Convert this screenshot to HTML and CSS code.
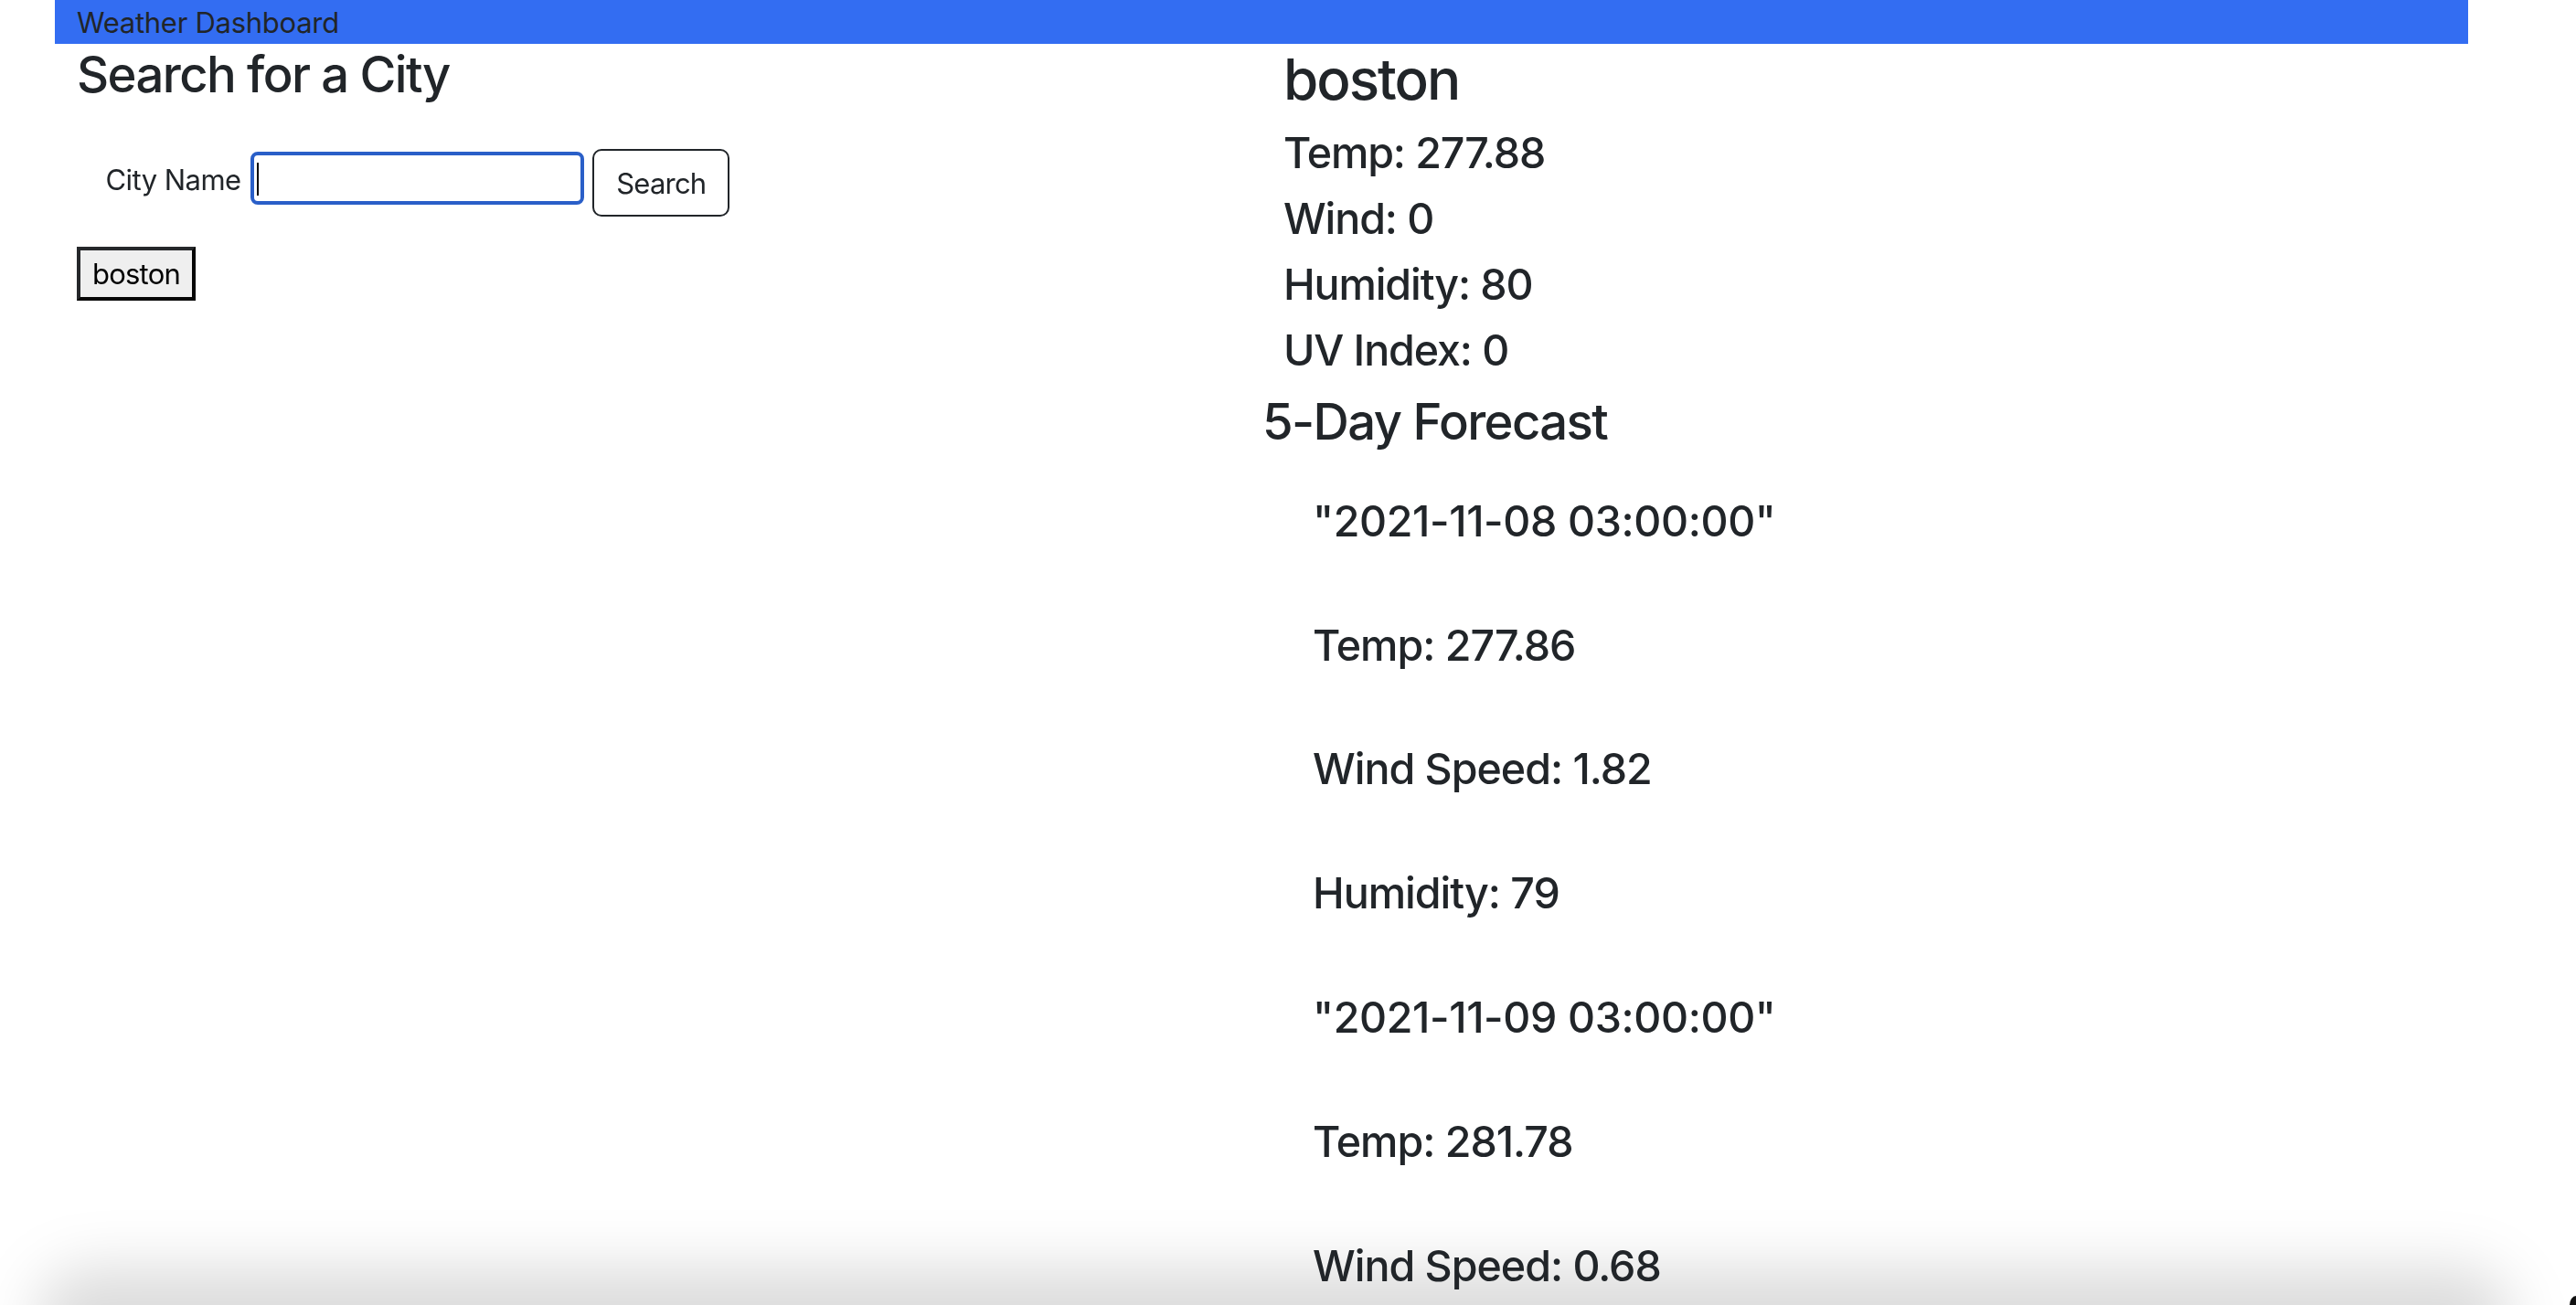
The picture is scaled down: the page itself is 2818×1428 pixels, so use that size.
FILE: index.html
```html
<!DOCTYPE html>
<html lang="en">
<head>
<meta charset="utf-8">
<title>Weather Dashboard</title>
<link rel="stylesheet" href="styles.css">
</head>
<body>
<div class="page">
  <header class="topbar">Weather Dashboard</header>
  <div class="row">
    <section class="search-col">
      <h3 class="title">Search for a City</h3>
      <form class="search-form">
        <label class="label" for="city">City Name</label>
        <span class="input-wrap">
          <input id="city" class="city-input" type="text">
          <span class="caret"></span>
        </span>
        <button type="button" class="btn-search">Search</button>
      </form>
      <div class="history">
        <button type="button" class="history-btn">boston</button>
      </div>
    </section>
    <section class="weather-col">
      <div class="current">
        <h2 class="city-name">boston</h2>
        <h4 class="stat">Temp: 277.88</h4>
        <h4 class="stat">Wind: 0</h4>
        <h4 class="stat">Humidity: 80</h4>
        <h4 class="stat">UV Index: 0</h4>
      </div>
      <h3 class="forecast-title">5-Day Forecast</h3>
      <div class="forecast">
        <p class="fc-line fc-date">"2021-11-08 03:00:00"</p>
        <p class="fc-line">Temp: 277.86</p>
        <p class="fc-line">Wind Speed: 1.82</p>
        <p class="fc-line">Humidity: 79</p>
        <p class="fc-line fc-date">"2021-11-09 03:00:00"</p>
        <p class="fc-line">Temp: 281.78</p>
        <p class="fc-line">Wind Speed: 0.68</p>
      </div>
    </section>
  </div>
</div>
<div class="shadow"></div>
<div class="corner"></div>
</body>
</html>
```

FILE: styles.css
```css
html {
  background: #ffffff;
}

body {
  margin: 0;
  height: 1428px;
  overflow: hidden;
  font-family: Inter, "Noto Sans", sans-serif;
  color: #212529;
}

.page {
  margin-left: 60px;
  width: 2640px;
}

.topbar {
  background: #336df2;
  height: 48px;
  line-height: 49.5px;
  font-size: 31px;
  letter-spacing: -0.009em;
  padding-left: 24px;
  overflow: hidden;
}

.row {
  display: grid;
  grid-template-columns: 1321px 1fr;
}

.search-col {
  padding-left: 24px;
}

.title,
.forecast-title {
  font-size: 54.4px;
  line-height: 67.2px;
  font-weight: 500;
  letter-spacing: -0.029em;
  margin: 0 0 16px;
}

.search-form {
  display: flex;
  align-items: flex-start;
  margin-top: 47.5px;
  padding-left: 31.5px;
}

.label {
  font-size: 31px;
  line-height: 48px;
  letter-spacing: -0.018em;
  margin-top: 10.3px;
  margin-right: 10px;
}

.input-wrap {
  position: relative;
  margin-top: 3.3px;
  margin-right: 9px;
}

.city-input {
  display: block;
  box-sizing: border-box;
  width: 365.7px;
  height: 58px;
  margin: 0;
  padding: 0;
  border: 4px solid #2a5fc8;
  border-radius: 8px;
  background: #ffffff;
  outline: none;
}

.caret {
  position: absolute;
  left: 7.3px;
  top: 11.7px;
  width: 2.5px;
  height: 36px;
  background: #000000;
}

.btn-search {
  box-sizing: border-box;
  height: 74.6px;
  margin: 0;
  padding: 1.4px 24px 0;
  font-family: inherit;
  font-size: 31px;
  line-height: 48px;
  letter-spacing: -0.025em;
  color: #212529;
  background: #ffffff;
  border: 2px solid #212529;
  border-radius: 10px;
}

.history {
  margin-top: 32.7px;
}

.history-btn {
  box-sizing: border-box;
  height: 59px;
  margin: 0;
  padding: 1px 13px 0;
  font-family: inherit;
  font-size: 31px;
  line-height: 48px;
  letter-spacing: -0.025em;
  color: #000000;
  background: #efefef;
  border-style: solid;
  border-width: 4px;
  border-color: #26282b #060606 #060606 #26282b;
  border-radius: 0;
}

.current {
  margin-left: 23px;
}

.city-name {
  font-size: 62px;
  line-height: 76.8px;
  font-weight: 500;
  letter-spacing: -0.033em;
  margin: 1px 0 13.4px;
}

.stat {
  font-size: 46.6px;
  line-height: 57.6px;
  font-weight: 500;
  letter-spacing: -0.024em;
  margin: 0 0 14.4px;
}

.forecast-title {
  margin-top: 15.4px;
}

.forecast {
  padding-top: 30.2px;
  padding-left: 55px;
}

.fc-line {
  font-size: 46.6px;
  line-height: 57.6px;
  font-weight: 500;
  letter-spacing: -0.022em;
  margin: 0 0 78.4px;
}

.fc-date {
  letter-spacing: -0.008em;
}

.shadow {
  position: fixed;
  left: 40px;
  right: 70px;
  bottom: -75px;
  height: 115px;
  background: rgba(0, 0, 0, 0.14);
  border-radius: 60px;
  filter: blur(32px);
  z-index: -1;
}

.corner {
  position: fixed;
  right: 0;
  bottom: 0;
  width: 7px;
  height: 10px;
  background: #111111;
  border-top-left-radius: 100% 100%;
}
```
